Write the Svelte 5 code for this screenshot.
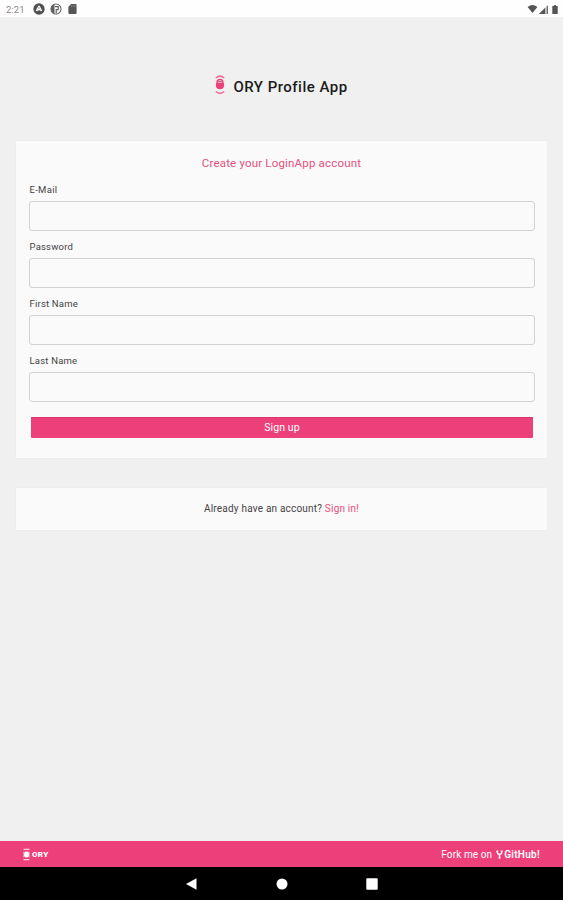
<script lang="ts">
  const fields = [
    { label: 'E-Mail', name: 'email', type: 'email', spacing: 0.3 },
    { label: 'Password', name: 'password', type: 'password', spacing: 0.2 },
    { label: 'First Name', name: 'first', type: 'text', spacing: 0.2 },
    { label: 'Last Name', name: 'last', type: 'text', spacing: 0.2 },
  ];
</script>

<div class="screen">
  <header class="status">
    <span class="time">2:21</span>
    <svg class="round" viewBox="0 0 12 12">
      <circle cx="6" cy="6" r="5.7" fill="#505050" />
      <path d="M3.2 8 5.7 3.2h.6L8.8 8M4.5 8 6 5.5 7.5 8" fill="none" stroke="#fff" stroke-width="1.1" />
    </svg>
    <svg class="round" viewBox="0 0 12 12">
      <circle cx="6" cy="6" r="5" fill="#fff" stroke="#666" stroke-width="1.1" />
      <path d="M4.5 1.2A5 5 0 0 0 4.5 10.8Z" fill="#606060" />
      <path d="M5 3.6h3.200v3H6.200V10" fill="none" stroke="#606060" stroke-width="1.2" />
    </svg>
    <svg class="sd" viewBox="0 0 9 11">
      <path d="M3 0h5q1 0 1 1v9q0 1-1 1H1q-1 0-1-1V3Z" fill="#555" />
      <path d="M3.2 1.4v2M5.2 1.4v2M7.2 1.4v2" stroke="#aaa" stroke-width=".7" />
    </svg>
    <span class="grow"></span>
    <svg class="wifi" viewBox="0 0 11 9"><path d="M0 2.2Q5.5-2 11 2.2L5.5 9Z" fill="#555" /></svg>
    <svg class="signal" viewBox="0 0 9 9">
      <path d="M9 0v9H0Z" fill="#bbb" />
      <path d="M6 3v6H0Z" fill="#555" />
      <path d="M8.4.8V9" stroke="#666" />
    </svg>
    <svg class="battery" viewBox="0 0 6 10"><path d="M2 0h2v1h2v9H0V1h2Z" fill="#555" /></svg>
  </header>

  <main>
    <h1>
      <svg class="logo" viewBox="0 0 10 20">
        <path d="M.8 3Q5-.7 9.2 3M.8 16.500Q5 20.200 9.2 16.500" fill="none" stroke="#ee6c95" stroke-width="1.5" />
        <path d="M2 7.500a3 3 0 0 1 6 0" fill="none" stroke="#ec3f79" stroke-width="1.3" />
        <circle cx="5" cy="10.2" r="4.1" fill="#ec3f79" />
        <path d="M3.2 7.500h3.600" stroke="#f7bfd0" stroke-width="1" />
      </svg>
      <span>ORY Profile App</span>
    </h1>

    <form class="card">
      <h2>Create your LoginApp account</h2>
      {#each fields as field}
        <label>
          <span style="letter-spacing: {field.spacing}px">{field.label}</span>
          <input type={field.type} name={field.name} />
        </label>
      {/each}
      <button type="button">Sign up</button>
    </form>

    <div class="card signin">
      <p>Already have an account? <a href="#signin">Sign in!</a></p>
    </div>
  </main>

  <footer>
    <div class="brand">
      <svg viewBox="0 0 7 13">
        <path d="M.5 1.3h6M.5 11.7h6" stroke="#fad0de" stroke-width="1.2" />
        <path d="M.5 3.5v6M6.5 3.5v6" stroke="#f59ab8" stroke-width=".8" />
        <rect x="1" y="3.6" width="5" height="6" rx="2" fill="#fff" />
      </svg>
      <b>ORY</b>
    </div>
    <div class="fork">
      <span>Fork me on</span>
      <svg viewBox="0 0 7 9">
        <path d="M1.3 1v1.500Q1.300 4 3.500 4.500 5.700 4 5.700 2.500V1M3.500 4.500V8.500" fill="none" stroke="#fff" stroke-width="1.4" />
        <path d="M.3 1h2M4.7 1h2M2.5 8h2" stroke="#fff" stroke-width="1.2" />
      </svg>
      <b>GitHub!</b>
    </div>
  </footer>

  <nav>
    <svg viewBox="0 0 12 12"><path d="M0 6 10.5.2v11.600Z" fill="#fff" /></svg>
    <svg viewBox="0 0 12 12"><circle cx="6" cy="6" r="5.5" fill="#fff" /></svg>
    <svg viewBox="0 0 12 12"><rect x=".3" y=".3" width="11.400" height="11.400" rx=".8" fill="#fff" /></svg>
  </nav>
</div>

<style>
  :global(body) {
    margin: 0;
  }
  .screen {
    display: flex;
    flex-direction: column;
    width: 563px;
    height: 900px;
    background: #f0f0f0;
    font-family: Roboto, sans-serif;
    color: #444;
    overflow: hidden;
  }
  svg {
    display: block;
    flex: none;
  }
  .status {
    display: flex;
    align-items: center;
    height: 17px;
    box-sizing: border-box;
    padding: 1px 5px 0 6px;
    background: #fefefe;
  }
  .time {
    width: 27px;
    font-size: 9.5px;
    letter-spacing: 0.1px;
    color: #888;
  }
  .round {
    width: 12px;
    height: 12px;
    margin-right: 5px;
  }
  .sd {
    width: 9px;
    height: 10px;
    margin-left: 1px;
  }
  .grow {
    flex: 1;
  }
  .wifi {
    width: 11px;
    height: 8px;
  }
  .signal {
    width: 9px;
    height: 9px;
    margin: 0 4px 0 1px;
  }
  .battery {
    width: 6px;
    height: 9px;
  }
  main {
    flex: 1;
    padding: 0 16px;
  }
  h1 {
    display: flex;
    align-items: center;
    justify-content: center;
    gap: 8px;
    height: 124px;
    margin: 0;
    padding: 15px 0 0;
    box-sizing: border-box;
    font-size: 15px;
    font-weight: 500;
    letter-spacing: 0.48px;
    color: #1c1c1c;
  }
  .logo {
    width: 10px;
    height: 20px;
    margin-top: -4px;
  }
  .card {
    display: block;
    height: 317px;
    box-sizing: border-box;
    padding: 14px 13px 0;
    background: #fafafa;
    box-shadow: 0 0 1px #e2e2e2;
  }
  h2 {
    margin: 0 0 13px;
    font-size: 11.5px;
    line-height: 16px;
    font-weight: 400;
    letter-spacing: 0.18px;
    text-align: center;
    color: #e4507f;
  }
  label {
    display: block;
    height: 57px;
    font-size: 9.5px;
    line-height: 11px;
  }
  label span {
    display: block;
    padding-left: 0.5px;
  }
  input {
    display: block;
    width: 506px;
    height: 30px;
    margin: 6px 0 0;
    box-sizing: border-box;
    border: 1px solid #d2d2d2;
    border-radius: 3px;
    background: #fafafa;
    outline: none;
  }
  button {
    display: block;
    width: 502px;
    height: 21px;
    margin: 5px 0 0 2px;
    padding: 0;
    border: 0;
    border-radius: 1px;
    background: #ed407a;
    box-shadow: inset 0 1px #da356b;
    font-family: inherit;
    font-size: 10.5px;
    letter-spacing: 0.1px;
    color: #fff;
  }
  .signin {
    height: 42px;
    margin-top: 30px;
    padding-top: 15px;
    text-align: center;
  }
  .signin p {
    margin: 0;
    font-size: 10px;
    line-height: 12px;
    letter-spacing: 0.2px;
  }
  .signin a {
    color: #ec4d80;
    text-decoration: none;
  }
  footer {
    display: flex;
    align-items: center;
    justify-content: space-between;
    height: 26px;
    box-sizing: border-box;
    padding: 0 23px;
    background: #ed407a;
    color: #fff;
  }
  .brand,
  .fork {
    display: flex;
    align-items: center;
  }
  .brand svg {
    width: 7px;
    height: 13px;
    margin-right: 2px;
  }
  .brand b {
    font-size: 8px;
    font-weight: 900;
    letter-spacing: 0.3px;
  }
  .fork {
    font-size: 10px;
    letter-spacing: 0.1px;
  }
  .fork svg {
    width: 7px;
    height: 9px;
    margin: 0 1px 0 4px;
  }
  .fork b {
    font-weight: 600;
    letter-spacing: 0.3px;
  }
  nav {
    display: flex;
    align-items: center;
    justify-content: center;
    gap: 78px;
    height: 33px;
    background: #000;
  }
  nav svg {
    width: 12px;
    height: 12px;
  }
</style>
